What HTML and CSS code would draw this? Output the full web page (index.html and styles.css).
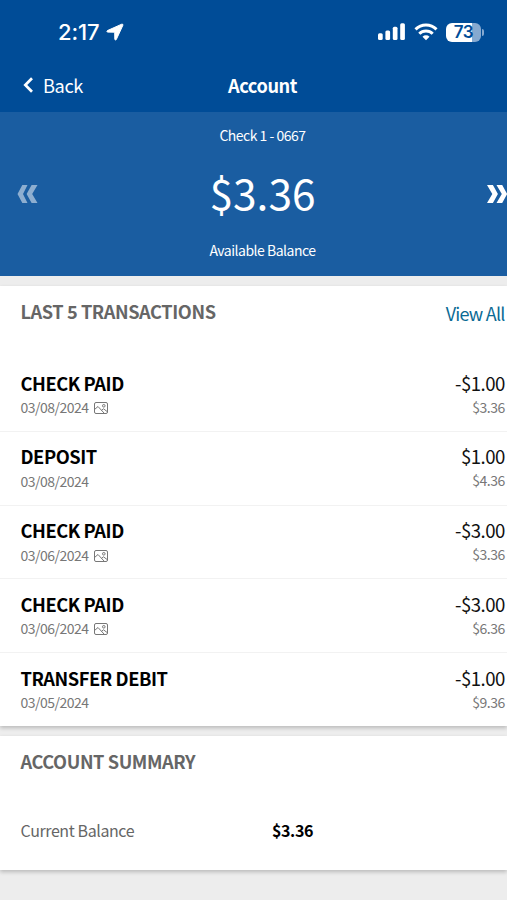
FILE: index.html
```html
<!DOCTYPE html>
<html lang="en">
<head>
  <meta charset="UTF-8">
  <meta name="viewport" content="width=device-width, initial-scale=1.0">
  <title>Account</title>
  <link rel="stylesheet" href="styles.css">
</head>
<body>
  <div class="app">
    <header class="top">
      <div class="status-bar">
        <div class="clock">
          <span>2:17</span>
          <svg class="location" width="18" height="18" viewBox="0 0 18 18"><path d="M15.7 1.2 1.4 7.6c-.8.4-.6 1.5.3 1.5l7 .1.1 7c0 .9 1.1 1.1 1.5.3L16.9 2.2c.3-.7-.5-1.3-1.2-1z" fill="#fff" stroke="#fff"/></svg>
        </div>
        <div class="status-icons">
          <svg width="28" height="18" viewBox="0 0 28 18" fill="#fff">
            <rect x="0" y="10.3" width="4.7" height="6.7" rx="1.5"/>
            <rect x="7.4" y="7.5" width="4.7" height="9.5" rx="1.5"/>
            <rect x="14.8" y="3.8" width="4.7" height="13.2" rx="1.5"/>
            <rect x="22.2" y="0.2" width="4.7" height="16.8" rx="1.5"/>
          </svg>
          <svg width="24" height="18" viewBox="0 0 24 18" fill="none" stroke="#fff" stroke-width="3">
            <path d="M1.5 6.4a15 15 0 0 1 21 0"/>
            <path d="M5.3 10.8a9.5 9.5 0 0 1 13.4 0"/>
            <path d="M12 17.2 8.5 13.7a5 5 0 0 1 7 0z" fill="#fff" stroke="none"/>
          </svg>
          <div class="battery">
            <span class="battery-body">73</span>
            <span class="battery-cap"></span>
          </div>
        </div>
      </div>
      <nav class="nav">
        <a class="back">
          <svg width="11" height="16" viewBox="0 0 11 16"><path d="M9 1.2 2.3 8 9 14.8" fill="none" stroke="#fff" stroke-width="2.7"/></svg>
          <span>Back</span>
        </a>
        <h1 class="nav-title">Account</h1>
      </nav>
    </header>

    <section class="balance">
      <svg class="arrow prev" width="21" height="18" viewBox="0 0 21 18"><path d="M5.3 0h5.2L6 9l4.500 9H5.300L.5 9zM14.600 0H20.500l-5.300 9 5.300 9h-5.900L9.600 9z"/></svg>
      <div class="balance-info">
        <div class="balance-name">Check 1 - 0667</div>
        <div class="balance-amount">$3.36</div>
        <div class="balance-label">Available Balance</div>
      </div>
      <svg class="arrow next" width="20" height="18" viewBox="0 0 20 18"><path d="M0 0h5.900l5 9-5 9H0l5.300-9zM9.500 0h5.700l5 9-5 9H9.500l5.300-9z"/></svg>
    </section>

    <section class="card transactions">
      <div class="card-header">
        <h2 class="card-title">LAST 5 TRANSACTIONS</h2>
        <a class="view-all">View All</a>
      </div>
      <div class="row">
        <div>
          <div class="name">CHECK PAID</div>
          <div class="date">03/08/2024 <svg class="image-icon" viewBox="0 0 14 12"><use href="#image"/></svg></div>
        </div>
        <div class="amounts">
          <div class="amount">-$1.00</div>
          <div class="running">$3.36</div>
        </div>
      </div>
      <div class="row">
        <div>
          <div class="name">DEPOSIT</div>
          <div class="date">03/08/2024</div>
        </div>
        <div class="amounts">
          <div class="amount">$1.00</div>
          <div class="running">$4.36</div>
        </div>
      </div>
      <div class="row">
        <div>
          <div class="name">CHECK PAID</div>
          <div class="date">03/06/2024 <svg class="image-icon" viewBox="0 0 14 12"><use href="#image"/></svg></div>
        </div>
        <div class="amounts">
          <div class="amount">-$3.00</div>
          <div class="running">$3.36</div>
        </div>
      </div>
      <div class="row">
        <div>
          <div class="name">CHECK PAID</div>
          <div class="date">03/06/2024 <svg class="image-icon" viewBox="0 0 14 12"><use href="#image"/></svg></div>
        </div>
        <div class="amounts">
          <div class="amount">-$3.00</div>
          <div class="running">$6.36</div>
        </div>
      </div>
      <div class="row">
        <div>
          <div class="name">TRANSFER DEBIT</div>
          <div class="date">03/05/2024</div>
        </div>
        <div class="amounts">
          <div class="amount">-$1.00</div>
          <div class="running">$9.36</div>
        </div>
      </div>
    </section>

    <section class="card summary">
      <h2 class="card-title">ACCOUNT SUMMARY</h2>
      <div class="summary-row">
        <span class="summary-label">Current Balance</span>
        <span class="summary-value">$3.36</span>
      </div>
    </section>
  </div>

  <svg class="icons">
    <symbol id="image" viewBox="0 0 14 12">
      <g fill="none" stroke="#777" stroke-width="1">
        <rect x="0.5" y="0.5" width="13" height="11" rx="1.5"/>
        <circle cx="9.8" cy="3.8" r="1.3"/>
        <path d="M.5 7.5 4 4.5l6 6.5M7.5 8.3l2-1.5 4 3"/>
      </g>
    </symbol>
  </svg>
</body>
</html>
```
FILE: styles.css
```css
* {
  margin: 0;
  padding: 0;
  box-sizing: border-box;
}

body {
  background-color: #ededed;
  color: #111;
  font-family: "Noto Sans CJK SC", "Open Sans", sans-serif;
}

.app {
  height: 900px;
  overflow: hidden;
}

.top {
  height: 112px;
  background-color: #004c97;
  color: #fff;
}

.status-bar {
  height: 64px;
  padding: 0 23px 0 58px;
  display: flex;
  justify-content: space-between;
  align-items: center;
}

.clock {
  display: flex;
  align-items: center;
  gap: 6px;
  font: 500 22px/26px Inter, sans-serif;
  letter-spacing: -0.1px;
}

.status-icons {
  display: flex;
  align-items: center;
  gap: 8px;
}

.battery {
  display: flex;
  align-items: center;
  gap: 1px;
}

.battery-body {
  width: 35px;
  height: 19px;
  border-radius: 6px;
  background: linear-gradient(90deg, #fff 73%, #86a9d0 73%);
  color: #004c97;
  font: 600 17px/19px Inter, sans-serif;
  letter-spacing: -0.5px;
  text-align: center;
}

.battery-cap {
  width: 2px;
  height: 7px;
  border-radius: 0 2px 2px 0;
  background-color: #86a9d0;
}

.nav {
  height: 41px;
  padding: 0 23px;
  display: grid;
  grid-template-columns: 1fr auto 1fr;
  align-items: center;
}

.back {
  display: flex;
  align-items: center;
  gap: 9px;
  font-size: 18.2px;
  line-height: 24px;
  letter-spacing: -0.4px;
}

.nav-title {
  padding-left: 18px;
  font-size: 18.2px;
  line-height: 24px;
  font-weight: 700;
  letter-spacing: -0.45px;
}

.balance {
  height: 164px;
  padding-left: 17px;
  background-color: #1a5da1;
  color: #fff;
  display: flex;
  justify-content: space-between;
  align-items: center;
}

.arrow {
  fill: #fff;
}

.prev {
  opacity: 0.5;
}

.balance-info {
  height: 164px;
  padding-top: 13px;
  text-align: center;
}

.balance-name,
.balance-label {
  font-size: 14px;
  line-height: 20px;
  letter-spacing: -0.5px;
}

.balance-amount {
  margin: 18px 0 20px;
  font-size: 42.5px;
  line-height: 57px;
}

.card {
  background-color: #fff;
  box-shadow: 0 2px 4px rgba(0, 0, 0, 0.22);
}

.transactions {
  height: 440px;
  margin-top: 10px;
}

.card-header {
  height: 72.4px;
  padding: 13px 2.3px 0 20.5px;
  display: flex;
  justify-content: space-between;
}

.card-title {
  color: #666;
  font-size: 18.2px;
  line-height: 24px;
  font-weight: 700;
  letter-spacing: -0.42px;
}

.view-all {
  padding-top: 2px;
  color: #0a6a94;
  font-size: 18px;
  line-height: 25px;
  letter-spacing: -0.75px;
}

.row {
  height: 73.7px;
  padding: 12.4px 2.3px 0 20.5px;
  border-bottom: 1px solid #f2f2f2;
  display: flex;
  justify-content: space-between;
}

.row:last-child {
  border-bottom: none;
}

.name {
  color: #000;
  font-size: 18.3px;
  line-height: 24px;
  font-weight: 700;
  letter-spacing: -0.45px;
}

.date,
.running {
  color: #777;
  font-size: 14px;
  line-height: 24px;
  letter-spacing: -0.5px;
}

.date {
  padding-top: 0.6px;
}

.running {
  line-height: 24px;
}

.amounts {
  text-align: right;
}

.amount {
  font-size: 18.6px;
  line-height: 24px;
  letter-spacing: -0.55px;
}

.image-icon {
  width: 14px;
  height: 12px;
  margin-left: 3px;
  vertical-align: -1px;
}

.summary {
  height: 134px;
  margin-top: 10px;
  padding: 13px 21px 0 20.5px;
}

.summary-row {
  margin-top: 45px;
  display: grid;
  grid-template-columns: 251.5px 1fr;
  font-size: 16px;
  line-height: 24px;
  letter-spacing: -0.4px;
}

.summary-label {
  color: #666;
}

.summary-value {
  color: #000;
  font-weight: 700;
}

.icons {
  display: none;
}
```
